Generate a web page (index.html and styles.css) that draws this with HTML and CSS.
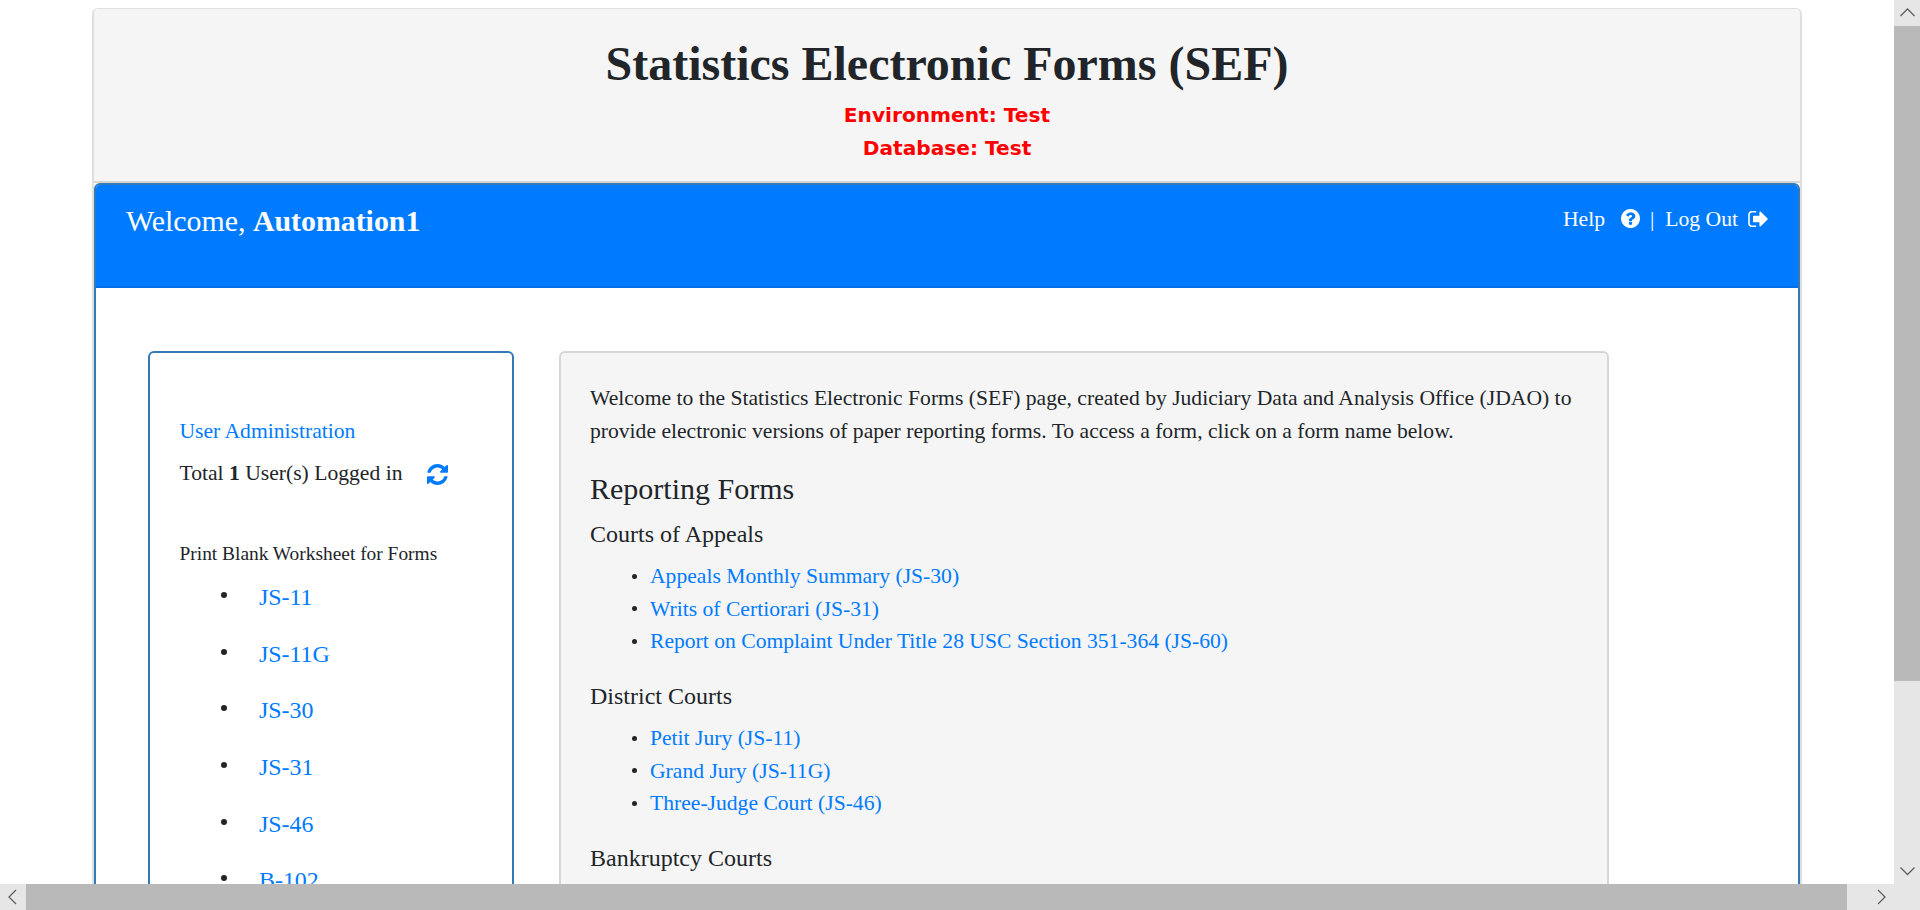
FILE: index.html
```html
<!DOCTYPE html>
<html lang="en">
<head>
<meta charset="utf-8">
<title>Statistics Electronic Forms (SEF)</title>
<link rel="stylesheet" href="styles.css">
</head>
<body>
<div class="window">
  <div class="viewport">
    <div class="page-card">
      <header class="page-header">
        <h1 class="title">Statistics Electronic Forms (SEF)</h1>
        <div class="env">Environment: Test</div>
        <div class="env">Database: Test</div>
      </header>
      <main class="main-card">
        <div class="topbar">
          <div class="welcome">Welcome, <b>Automation1</b></div>
          <nav class="topnav">
            <a class="help">Help</a>
            <svg class="icon-help" viewBox="0 0 1536 1536"><path fill="#fff" d="M896 1248v-192q0-14-9-23t-23-9H672q-14 0-23 9t-9 23v192q0 14 9 23t23 9h192q14 0 23-9t9-23zm256-672q0-88-55.500-163T958 297t-170-41q-243 0-371 213-15 24 8 42l132 100q7 6 19 6 16 0 25-12 53-68 86-92 34-24 86-24 48 0 85.500 26t37.500 59q0 38-20 61t-68 45q-63 28-115.500 86.500T640 892v36q0 14 9 23t23 9h192q14 0 23-9t9-23q0-19 21.500-49.500T972 829q32-18 49-28.500t46-35 44.500-48 28-60.500 12.500-81zm384 192q0 209-103 385.500T1153.500 1433 768 1536t-385.500-103T103 1153.500 0 768t103-385.500T382.500 103 768 0t385.500 103T1433 382.500 1536 768z"/></svg>
            <span class="sep">|</span>
            <a class="logout">Log Out</a>
            <svg class="icon-out" viewBox="0 0 1568 1280"><path fill="#fff" d="M640 1184q0 4 1 20t.5 26.500-3 23.500-10 19.500T608 1280H288q-119 0-203.500-84.500T0 992V288Q0 169 84.500 84.500T288 0h320q13 0 22.500 9.500T640 32q0 4 1 20t.5 26.500-3 23.500-10 19.500T608 128H288q-66 0-113 47t-47 113v704q0 66 47 113t113 47h312l11.500 1 11.500 3 8 5.500 7 9 2 13.500zm928-544q0 26-19 45l-544 544q-19 19-45 19t-45-19-19-45V896H448q-26 0-45-19t-19-45V448q0-26 19-45t45-19h448V96q0-26 19-45t45-19 45 19l544 544q19 19 19 45z"/></svg>
          </nav>
        </div>
        <div class="columns">
          <aside class="side-card">
            <a class="admin">User Administration</a>
            <div class="total"><span>Total <b>1</b> User(s) Logged in</span>
              <svg class="icon-refresh" viewBox="0 0 1536 1536"><path fill="#007bff" d="M1511 928q0 5-1 7-64 268-268 434.500T764 1536q-146 0-282.500-55T238 1324l-129 129q-19 19-45 19t-45-19-19-45V960q0-26 19-45t45-19h448q26 0 45 19t19 45-19 45l-137 137q71 66 161 102t187 36q134 0 250-65t186-179q11-17 53-117 8-23 30-23h192q13 0 22.500 9.500t9.500 22.500zm25-800v448q0 26-19 45t-45 19h-448q-26 0-45-19t-19-45 19-45l138-138Q969 256 768 256q-134 0-250 65T332 500q-11 17-53 117-8 23-30 23H50q-13 0-22.500-9.500T18 608v-7q65-268 270-434.500T768 0q146 0 284 55.500T1297 212l130-129q19-19 45-19t45 19 19 45z"/></svg>
            </div>
            <div class="print">Print Blank Worksheet for Forms</div>
            <ul class="worksheets">
              <li><a>JS-11</a></li>
              <li><a>JS-11G</a></li>
              <li><a>JS-30</a></li>
              <li><a>JS-31</a></li>
              <li><a>JS-46</a></li>
              <li><a>B-102</a></li>
            </ul>
          </aside>
          <section class="content-card">
            <p class="intro">Welcome to the Statistics Electronic Forms (SEF) page, created by Judiciary Data and Analysis Office (JDAO) to<br>provide electronic versions of paper reporting forms. To access a form, click on a form name below.</p>
            <h2 class="heading">Reporting Forms</h2>
            <h3 class="court">Courts of Appeals</h3>
            <ul class="forms">
              <li><a>Appeals Monthly Summary (JS-30)</a></li>
              <li><a>Writs of Certiorari (JS-31)</a></li>
              <li><a>Report on Complaint Under Title 28 USC Section 351-364 (JS-60)</a></li>
            </ul>
            <h3 class="court">District Courts</h3>
            <ul class="forms">
              <li><a>Petit Jury (JS-11)</a></li>
              <li><a>Grand Jury (JS-11G)</a></li>
              <li><a>Three-Judge Court (JS-46)</a></li>
            </ul>
            <h3 class="court">Bankruptcy Courts</h3>
          </section>
        </div>
      </main>
    </div>
  </div>
  <div class="vbar">
    <svg class="arrow" viewBox="0 0 26 26"><path d="M6.500 16 13.500 9l7 7"/></svg>
    <div class="vthumb"></div>
    <svg class="arrow vend" viewBox="0 0 26 26"><path d="M6.500 9.500l7 7 7-7"/></svg>
  </div>
  <div class="hbar">
    <svg class="arrow" viewBox="0 0 26 26"><path d="M16 6 9 13l7 7"/></svg>
    <div class="hthumb"></div>
    <svg class="arrow hend" viewBox="0 0 26 26"><path d="M10 6l7 7-7 7"/></svg>
    <div class="corner"></div>
  </div>
</div>
</body>
</html>
```
FILE: styles.css
```css
* { box-sizing: border-box; }
body {
  margin: 0;
  color: #212529;
  background: #fff;
  font: 21.620px/32.5px "Liberation Serif", "Times New Roman", serif;
}
h1, h2, h3, p, ul { margin: 0; padding: 0; font-weight: 400; }
a { color: #007bff; }
.window {
  display: grid;
  grid-template: 884px 26px / 1894px 26px;
  width: 1920px;
  height: 910px;
  overflow: hidden;
}
.viewport { height: 884px; padding: 8px 92px 0; overflow: hidden; }
.page-card {
  width: 1710px;
  height: 1300px;
  border: 2px solid #dfdfdf;
  border-top-width: 1px;
  border-radius: 6px;
}
.page-header {
  height: 174px;
  padding-top: 26px;
  text-align: center;
  background: #f5f5f5;
  border-bottom: 2px solid #d5d6d6;
  border-radius: 5px 5px 0 0;
}
.title { font-size: 48px; line-height: 58px; font-weight: 700; margin-bottom: 6px; }
.env { color: #f00; font: 700 20.150px/33px Verdana, "DejaVu Sans", sans-serif; }
.main-card { height: 1200px; border: 2px solid #337ab7; border-radius: 6px; }
.topbar {
  display: flex;
  justify-content: space-between;
  height: 103px;
  padding: 18px 30px 0;
  background: #007bff;
  border-bottom: 2px solid #006fe6;
  border-radius: 4px 4px 0 0;
  color: #fff;
}
.welcome { font-size: 29.850px; line-height: 36px; }
.topnav { display: flex; height: 33px; line-height: 32px; }
.topnav a { color: #fff; }
.icon-help { width: 19px; height: 19px; margin: 6px 10px 0 16px; }
.sep { margin-right: 11px; }
.icon-out { width: 20px; height: 16px; margin: 8px 0 0 10px; }
.columns { display: flex; gap: 45px; padding: 63px 0 0 52px; }
.side-card {
  width: 366px;
  height: 900px;
  padding: 62px 29.5px 0 29.5px;
  border: 2px solid #337ab7;
  border-radius: 6px;
}
.admin, .total, .print { display: block; }
.total { display: flex; margin-top: 9px; }
.icon-refresh { width: 21px; height: 21px; margin: 7px 0 0 25px; }
.print { margin-top: 51px; font-size: 19.400px; line-height: 28px; }
.worksheets { list-style: none; margin-top: 14px; }
.worksheets li {
  display: flex;
  align-items: flex-start;
  height: 56.700px;
  padding-left: 39.5px;
}
.worksheets li::before {
  content: "";
  width: 6px;
  height: 6px;
  margin: 10px 32px 0 2px;
  border-radius: 50%;
  background: #212529;
}
.worksheets a { font-size: 23.900px; line-height: 31px; }
.content-card {
  width: 1050px;
  height: 900px;
  padding: 29px 20px 0 29px;
  background: #f5f5f5;
  border: 2px solid #d5d6d6;
  border-radius: 6px;
  white-space: nowrap;
}
.heading { margin-top: 24px; font-size: 30px; line-height: 36px; }
.court { margin-top: 12px; font-size: 24px; line-height: 30px; }
.forms { list-style: none; margin: 11px 0 23.5px 42px; }
.forms li { display: flex; align-items: center; height: 32.500px; }
.forms li::before {
  content: "";
  width: 5px;
  height: 5px;
  margin-right: 13px;
  border-radius: 50%;
  background: #212529;
}
.vbar { display: flex; flex-direction: column; background: #e6e6e6; }
.vthumb { height: 655px; background: #b9b9b9; }
.vend { margin-top: auto; }
.hbar { grid-column: 1 / 3; display: flex; background: #e6e6e6; }
.hthumb { width: 1821px; background: #b9b9b9; }
.hend { margin-left: auto; }
.corner { width: 26px; }
.arrow { flex: none; width: 26px; height: 26px; fill: none; stroke: #606060; stroke-width: 1.300; }
```
